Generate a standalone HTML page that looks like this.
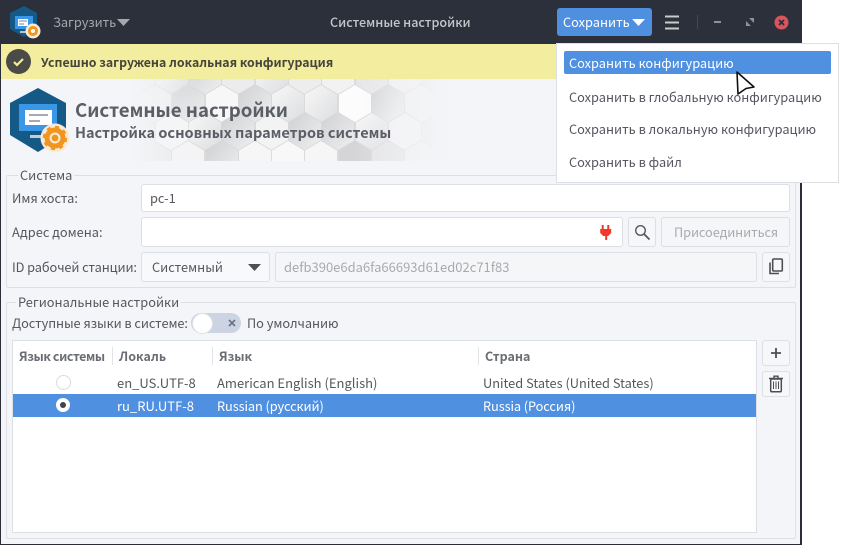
<!DOCTYPE html>
<html><head><meta charset="utf-8">
<style>
html,body{margin:0;padding:0;background:#fff;}
body{width:842px;height:545px;overflow:hidden;position:relative;font-family:"Noto Sans CJK SC","Liberation Sans",sans-serif;font-size:12.8px;color:#55575e;}
.a{position:absolute;white-space:nowrap;}
.t{position:absolute;white-space:nowrap;line-height:18px;}
.box{position:absolute;box-sizing:border-box;border:1px solid #dcdfe3;border-radius:3px;}
.fs{position:absolute;box-sizing:border-box;border:1px solid #dcdfe3;border-radius:2px;}
.lg{position:absolute;white-space:nowrap;background:#f4f5f8;padding:0 2px;line-height:16px;}
.th{font-weight:700;font-size:12.5px;color:#6b6d74;}
</style></head>
<body>
<div class="a" style="left:0;top:0;width:802px;height:545px;background:#f4f5f8;box-sizing:border-box;border:1px solid #2b2e38;border-top:0;border-right-width:2px;border-bottom-width:1px;"></div>
<div class="a" style="left:0;top:0;width:802px;height:44px;background:#2c303b;"></div>
<svg class="a" style="left:8px;top:5px" width="34" height="34" viewBox="0 0 34 34">
<polygon points="16,1 29,8 29,24 16,32 2,24 2,8" fill="#155a87"/>
<rect x="7" y="11" width="18" height="13" fill="#3a96e6"/><rect x="10" y="14" width="10" height="7" fill="#fff"/>
<path d="M11 16H19M11 19H16" stroke="#5a6068" stroke-width=".8"/>
<rect x="12" y="26" width="8" height="2" fill="#b9c2c9"/>
<circle cx="25" cy="26" r="7.5" fill="#f8e9d2"/><circle cx="25" cy="26" r="5" fill="#f19420"/><circle cx="25" cy="26" r="2" fill="#fff"/>
</svg>
<div class="t" style="left:53px;top:13px;color:#a5a8ae;letter-spacing:-.05px;">Загрузить</div>
<svg class="a" style="left:117px;top:19px" width="13" height="7"><polygon points="0,0 13,0 6.5,7" fill="#a5a8ae"/></svg>
<div class="t" style="left:330px;top:13px;color:#c5c7cb;font-weight:500;font-size:12.6px;">Системные настройки</div>
<div class="a" style="left:557px;top:8px;width:95px;height:28px;background:#4f8fe0;border-radius:3px;"></div>
<div class="t" style="left:563px;top:13px;color:#fff;">Сохранить</div>
<svg class="a" style="left:632px;top:19px" width="13" height="7"><polygon points="0,0 13,0 6.5,7" fill="#fff"/></svg>
<svg class="a" style="left:665px;top:15px" width="15" height="15"><path d="M0 1.5H14M0 7.5H14M0 13.5H14" stroke="#c8cacd" stroke-width="2"/></svg>
<div class="a" style="left:697px;top:15px;width:1px;height:14px;background:#444853;"></div>
<div class="a" style="left:714px;top:21px;width:7px;height:2px;background:#8f929a;"></div>
<svg class="a" style="left:746px;top:18px" width="8" height="8"><path d="M3 0H8V5ZM0 3L5 8H0Z" fill="#8f929a"/></svg>
<svg class="a" style="left:774px;top:15px" width="15" height="15"><circle cx="7.5" cy="7.5" r="7" fill="#d9545c"/><path d="M5 5L10 10M10 5L5 10" stroke="#2c303b" stroke-width="1.8"/></svg>

<div class="a" style="left:1px;top:44px;width:799px;height:35px;background:#f3ee9f;"></div>
<svg class="a" style="left:6px;top:49px" width="25" height="25"><circle cx="12.5" cy="12.5" r="12.5" fill="#4a4a46"/><path d="M8 13L11 16L17 10" stroke="#f3ee9f" stroke-width="2.2" fill="none"/></svg>
<div class="t" style="left:41px;top:53px;font-weight:700;font-size:12.33px;color:#45453a;">Успешно загружена локальная конфигурация</div>

<svg class="a" style="left:130px;top:79px" width="340" height="82" viewBox="0 0 340 82">
<defs>
<linearGradient id="f" x1="0" x2="1" y1="0" y2="0"><stop offset="0" stop-color="#f4f5f8" stop-opacity="1"/><stop offset=".2" stop-color="#f4f5f8" stop-opacity="0"/><stop offset=".66" stop-color="#f4f5f8" stop-opacity="0"/><stop offset=".94" stop-color="#f4f5f8" stop-opacity="1"/></linearGradient>
<linearGradient id="h" x1="0" x2="1" y1="0" y2="1"><stop offset="0" stop-color="#cfd0d2"/><stop offset="1" stop-color="#f0f0f1"/></linearGradient>
<linearGradient id="h2" x1="0" x2="1" y1="0" y2="1"><stop offset="0" stop-color="#f8f8f8"/><stop offset="1" stop-color="#dcdddf"/></linearGradient>
<polygon id="x" points="0,-19.5 16.5,-9.75 16.5,9.75 0,19.5 -16.5,9.75 -16.5,-9.75"/>
</defs>
<rect width="340" height="82" fill="#e9e9ea"/>
<g stroke="#d8d8da" stroke-width=".8">
<use href="#x" x="42" y="-3" fill="url(#h2)"/><use href="#x" x="75" y="-3" fill="url(#h)"/><use href="#x" x="108" y="-3" fill="#ececed"/><use href="#x" x="142" y="-3" fill="url(#h2)"/><use href="#x" x="175" y="-3" fill="#ededee"/><use href="#x" x="208" y="-3" fill="#f2f2f3"/><use href="#x" x="242" y="-3" fill="#e6e6e8"/><use href="#x" x="275" y="-3" fill="#efefef"/>
<use href="#x" x="25" y="25" fill="#eeeeef"/><use href="#x" x="58" y="25" fill="url(#h)"/><use href="#x" x="92" y="25" fill="#f7f7f7"/><use href="#x" x="125" y="25" fill="url(#h)"/><use href="#x" x="158" y="25" fill="url(#h2)"/><use href="#x" x="191" y="25" fill="url(#h2)"/><use href="#x" x="225" y="25" fill="#fcfcfc"/><use href="#x" x="258" y="25" fill="url(#h)"/><use href="#x" x="291" y="25" fill="#f0f0f1"/>
<use href="#x" x="42" y="53" fill="#f5f5f6"/><use href="#x" x="75" y="53" fill="url(#h2)"/><use href="#x" x="108" y="53" fill="url(#h)"/><use href="#x" x="142" y="53" fill="#f3f3f4"/><use href="#x" x="175" y="53" fill="url(#h)"/><use href="#x" x="208" y="53" fill="url(#h)"/><use href="#x" x="242" y="53" fill="url(#h2)"/><use href="#x" x="275" y="53" fill="#f2f2f3"/>
<use href="#x" x="58" y="81" fill="#f4f4f5"/><use href="#x" x="92" y="81" fill="url(#h)"/><use href="#x" x="125" y="81" fill="#f6f6f7"/><use href="#x" x="158" y="81" fill="#f8f8f8"/><use href="#x" x="191" y="81" fill="#f6f6f6"/><use href="#x" x="225" y="81" fill="#d5d5d7"/><use href="#x" x="258" y="81" fill="#e4e4e5"/><use href="#x" x="291" y="81" fill="#f0f0f1"/>
</g>
<rect width="340" height="82" fill="url(#f)"/>
</svg>
<svg class="a" style="left:8px;top:87px" width="62" height="68" viewBox="0 0 62 68">
<polygon points="30,1 58,16 58,48 30,65 2,48 2,16" fill="#155a87"/>
<rect x="11" y="17" width="38" height="27" fill="#3a96e6"/><rect x="17" y="23" width="27" height="15" fill="#fff"/>
<path d="M21 28H40M21 34H32" stroke="#4d5560" stroke-width="1"/>
<rect x="22" y="48" width="16" height="3" fill="#c3ccd3"/>
<circle cx="47" cy="51" r="14.5" fill="#f9ead6"/>
<circle cx="47" cy="51" r="8" fill="none" stroke="#f19420" stroke-width="5"/>
<circle cx="47" cy="51" r="11" fill="none" stroke="#f19420" stroke-width="2.5" stroke-dasharray="4 4.6"/>
<circle cx="47" cy="51" r="3.4" fill="#f19420"/>
</svg>
<div class="t" style="left:75px;top:98px;font-size:18.6px;line-height:24px;font-weight:700;color:#5c5e66;">Системные настройки</div>
<div class="t" style="left:75px;top:122px;font-size:14.5px;line-height:22px;font-weight:700;color:#5c5e66;">Настройка основных параметров системы</div>

<div class="fs" style="left:6px;top:175px;width:790px;height:113px;"></div>
<div class="lg" style="left:18px;top:167px;">Система</div>
<div class="t" style="left:12px;top:189px;">Имя хоста:</div>
<div class="box" style="left:141px;top:184px;width:649px;height:28px;background:#fff;"></div>
<div class="t" style="left:150px;top:189px;">pc-1</div>
<div class="t" style="left:12px;top:223px;">Адрес домена:</div>
<div class="box" style="left:141px;top:217px;width:482px;height:30px;background:#fff;"></div>
<svg class="a" style="left:600px;top:225px" width="12" height="16"><path d="M2.7 0V4M8.3 0V4" stroke="#f0392b" stroke-width="2"/><path d="M0 4H11V8L8 11H7V15H5V11H3L0 8Z" fill="#f0392b" transform="translate(0.2,0)"/></svg>
<div class="box" style="left:628px;top:217px;width:28px;height:30px;background:#f6f7f9;"></div>
<svg class="a" style="left:634px;top:224px" width="17" height="17"><circle cx="6.5" cy="6.5" r="4.8" fill="none" stroke="#55575f" stroke-width="1.4"/><path d="M10 10L15.5 15.5" stroke="#55575f" stroke-width="1.8"/></svg>
<div class="box" style="left:661px;top:217px;width:129px;height:30px;background:#f5f6f8;"></div>
<div class="t" style="left:674px;top:223px;color:#a8aab0;letter-spacing:-.1px;">Присоединиться</div>
<div class="t" style="left:12px;top:258px;letter-spacing:-.1px;">ID рабочей станции:</div>
<div class="box" style="left:141px;top:252px;width:129px;height:30px;background:#f8f9fb;"></div>
<div class="t" style="left:152px;top:258px;">Системный</div>
<svg class="a" style="left:248px;top:264px" width="13" height="7"><polygon points="0,0 13,0 6.5,7" fill="#4d4f56"/></svg>
<div class="box" style="left:275px;top:252px;width:482px;height:30px;background:#f5f6f8;"></div>
<div class="t" style="left:284px;top:258px;color:#a8aab0;font-size:13px;">defb390e6da6fa66693d61ed02c71f83</div>
<div class="box" style="left:762px;top:252px;width:28px;height:30px;background:#f6f7f9;"></div>
<svg class="a" style="left:768px;top:258px" width="16" height="18"><rect x="4.7" y="1" width="9.6" height="12" rx="1" fill="none" stroke="#4d4f56" stroke-width="1.6"/><path d="M2 4.5V15.5H11" fill="none" stroke="#4d4f56" stroke-width="1.6"/></svg>

<div class="fs" style="left:6px;top:302px;width:790px;height:237px;"></div>
<div class="lg" style="left:16px;top:294px;">Региональные настройки</div>
<div class="t" style="left:12px;top:314px;letter-spacing:-.08px;">Доступные языки в системе:</div>
<div class="a" style="left:191px;top:313px;width:50px;height:20px;background:#ccd3e2;border-radius:10px;"></div>
<div class="a" style="left:192px;top:313px;width:19px;height:19px;background:#fff;border-radius:50%;border:1px solid #dde0e6;"></div>
<svg class="a" style="left:228px;top:319px" width="8" height="8"><path d="M1 1L7 7M7 1L1 7" stroke="#6d7280" stroke-width="1.6"/></svg>
<div class="t" style="left:247px;top:314px;letter-spacing:-.05px;">По умолчанию</div>

<div class="box" style="left:12px;top:340px;width:745px;height:193px;background:#fff;border-radius:0;"></div>
<div class="t th" style="left:19px;top:347px;letter-spacing:-.4px;">Язык системы</div>
<div class="a" style="left:112px;top:347px;width:1px;height:18px;background:#e2e4e7;"></div>
<div class="t th" style="left:119px;top:347px;">Локаль</div>
<div class="a" style="left:212px;top:347px;width:1px;height:18px;background:#e2e4e7;"></div>
<div class="t th" style="left:219px;top:347px;">Язык</div>
<div class="a" style="left:478px;top:347px;width:1px;height:18px;background:#e2e4e7;"></div>
<div class="t th" style="left:485px;top:347px;">Страна</div>
<div class="a" style="left:56px;top:375px;width:13px;height:13px;border:1px solid #d8dade;border-radius:50%;background:#fff;"></div>
<div class="t" style="left:117px;top:374px;font-size:13px;">en_US.UTF-8</div>
<div class="t" style="left:217px;top:374px;font-size:13px;">American English (English)</div>
<div class="t" style="left:483px;top:374px;">United States (United States)</div>
<div class="a" style="left:13px;top:394px;width:743px;height:23px;background:#5090e0;"></div>
<div class="a" style="left:56px;top:398px;width:14px;height:14px;border-radius:50%;background:#fff;"></div>
<div class="a" style="left:60px;top:402px;width:6px;height:6px;border-radius:50%;background:#3f4450;"></div>
<div class="t" style="left:117px;top:397px;color:#fff;font-size:13px;">ru_RU.UTF-8</div>
<div class="t" style="left:217px;top:397px;color:#fff;letter-spacing:-.1px;">Russian (русский)</div>
<div class="t" style="left:483px;top:397px;color:#fff;letter-spacing:-.1px;">Russia (Россия)</div>
<div class="box" style="left:762px;top:340px;width:28px;height:26px;background:#f6f7f9;"></div>
<svg class="a" style="left:770px;top:347px" width="12" height="12"><path d="M6 1V11M1 6H11" stroke="#4d4f56" stroke-width="1.8"/></svg>
<div class="box" style="left:762px;top:371px;width:28px;height:26px;background:#f6f7f9;"></div>
<svg class="a" style="left:768px;top:375px" width="16" height="18"><path d="M1 3.5H15M6 3V1.2H10V3" fill="none" stroke="#4d4f56" stroke-width="1.4"/><rect x="2.7" y="4" width="10.6" height="12.8" rx="1" fill="none" stroke="#4d4f56" stroke-width="1.5"/><path d="M5.5 6.5V14M8 6.5V14M10.5 6.5V14" stroke="#4d4f56" stroke-width="1"/></svg>

<div class="a" style="left:556px;top:43px;width:283px;height:140px;background:#fff;box-sizing:border-box;border:1px solid #dcdfe3;"></div>
<div class="a" style="left:564px;top:51px;width:267px;height:23px;background:#5090e0;border-radius:2px;"></div>
<div class="t" style="left:569px;top:54px;color:#fff;">Сохранить конфигурацию</div>
<div class="t" style="left:569px;top:88px;">Сохранить в глобальную конфигурацию</div>
<div class="t" style="left:569px;top:120px;">Сохранить в локальную конфигурацию</div>
<div class="t" style="left:569px;top:153px;">Сохранить в файл</div>
<svg class="a" style="left:735px;top:70px" width="22" height="26" viewBox="0 0 22 26"><path d="M2 2L19 17L11 18.5L3 24Z" fill="#fff" stroke="#111" stroke-width="1.6" stroke-linejoin="round"/></svg>
</body></html>
